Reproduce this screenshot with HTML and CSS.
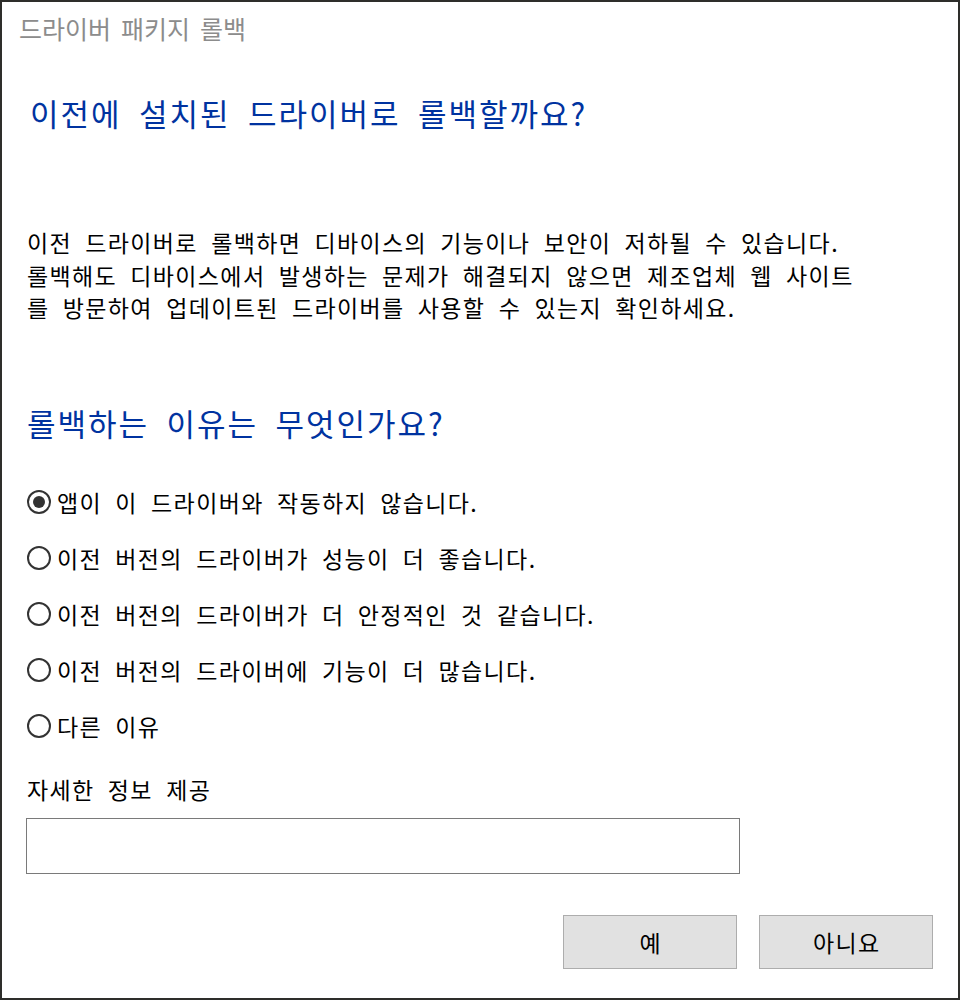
FILE: index.html
```html
<!DOCTYPE html>
<html lang="ko">
<head>
<meta charset="UTF-8">
<title>드라이버 패키지 롤백</title>
<link rel="stylesheet" href="styles.css">
</head>
<body>
  <div class="dialog">
    <div class="title">드라이버 패키지 롤백</div>
    <h1 class="heading first">이전에 설치된 드라이버로 롤백할까요?</h1>
    <p class="info">이전 드라이버로 롤백하면 디바이스의 기능이나 보안이 저하될 수 있습니다.<br>롤백해도 디바이스에서 발생하는 문제가 해결되지 않으면 제조업체 웹 사이트<br>를 방문하여 업데이트된 드라이버를 사용할 수 있는지 확인하세요.</p>
    <h2 class="heading second">롤백하는 이유는 무엇인가요?</h2>
    <div class="reasons">
      <label class="reason"><span class="radio checked"></span>앱이 이 드라이버와 작동하지 않습니다.</label>
      <label class="reason"><span class="radio"></span>이전 버전의 드라이버가 성능이 더 좋습니다.</label>
      <label class="reason"><span class="radio"></span>이전 버전의 드라이버가 더 안정적인 것 같습니다.</label>
      <label class="reason"><span class="radio"></span>이전 버전의 드라이버에 기능이 더 많습니다.</label>
      <label class="reason"><span class="radio"></span>다른 이유</label>
    </div>
    <div class="details-label">자세한 정보 제공</div>
    <div class="details-box"></div>
    <div class="buttons">
      <button class="btn">예</button>
      <button class="btn">아니요</button>
    </div>
  </div>
</body>
</html>
```

FILE: styles.css
```css
body {
  margin: 0;
  background-color: #2e2e2b;
  font-family: "Noto Sans CJK KR", "Noto Sans", sans-serif;
}
.dialog {
  margin: 2px;
  width: 956px;
  height: 996px;
  background-color: #fff;
  box-sizing: border-box;
  padding-left: 25px;
}
.title {
  margin-left: -8px;
  padding-top: 9px;
  height: 42px;
  line-height: 34px;
  font-size: 25px;
  letter-spacing: 0;
  word-spacing: 3px;
  color: #8c8c8c;
}
.heading {
  margin: 0;
  font-weight: normal;
  color: #0033a0;
  font-size: 31px;
  line-height: 40px;
  letter-spacing: 1.95px;
  word-spacing: 7px;
}
.heading.first {
  margin-left: 3px;
  margin-top: 40px;
}
.info {
  margin: 93px 0 0;
  font-size: 23px;
  line-height: 32.5px;
  letter-spacing: 1.35px;
  word-spacing: 5.5px;
  color: #000;
}
.heading.second {
  margin-top: 79px;
}
.reasons {
  margin-top: 32px;
  display: flex;
  flex-direction: column;
}
.reason {
  display: flex;
  align-items: center;
  height: 55.8px;
  font-size: 23px;
  letter-spacing: 1.35px;
  word-spacing: 5.5px;
  color: #000;
}
.radio {
  width: 20px;
  height: 20px;
  border: 2px solid #333;
  border-radius: 50%;
  margin-right: 6px;
  position: relative;
  flex-shrink: 0;
}
.radio.checked::after {
  content: "";
  position: absolute;
  left: 4px;
  top: 4px;
  width: 12px;
  height: 12px;
  border-radius: 50%;
  background-color: #333;
}
.details-label {
  margin-top: 20px;
  font-size: 23px;
  line-height: 32px;
  letter-spacing: 1.35px;
  word-spacing: 5.5px;
}
.details-box {
  margin-top: 13px;
  margin-left: -1px;
  width: 712px;
  height: 54px;
  border: 1px solid #7a7a7a;
}
.buttons {
  display: flex;
  gap: 22px;
  margin-top: 41px;
  margin-left: 536px;
}
.btn {
  width: 174px;
  height: 54px;
  background-color: #e1e1e1;
  border: 1px solid #adadad;
  font-family: inherit;
  font-size: 23px;
  letter-spacing: 1.35px;
  padding: 0 0 0 1.35px;
  color: #000;
}
```
